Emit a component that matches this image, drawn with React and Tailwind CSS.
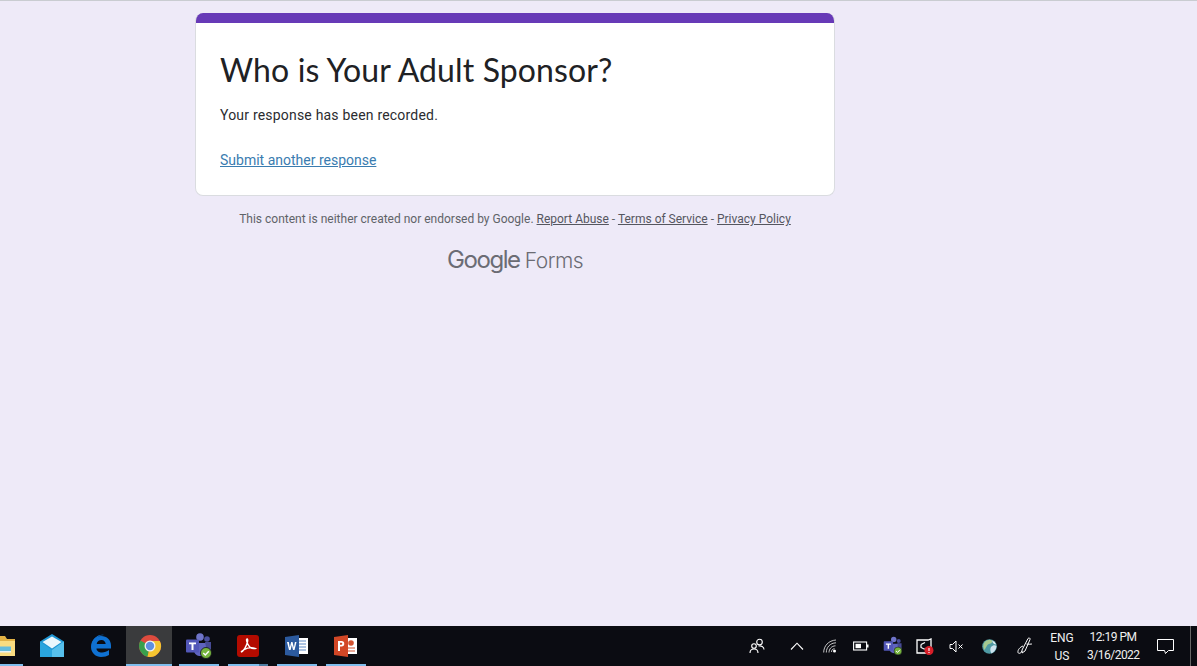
const Slot = ({ active, under, split, children }) => (
  <div className="relative h-full w-[49px] flex items-center justify-center shrink-0">
    {active && <div className="absolute inset-y-0 left-[1px] right-[2px] bg-[#3a3b3d]" />}
    <div className="relative flex">{children}</div>
    {under && <div className={`absolute bottom-0 h-[2px] bg-[#7fbdec] ${active ? "left-[1px] right-[2px]" : "left-[5px] right-[4px]"}`} />}
    {split && <div className="absolute bottom-0 right-[4px] w-[9px] h-[2px] bg-[#4f7ea3]" />}
  </div>
);

const Folder = () => (
  <svg width="24" height="24" viewBox="0 0 24 24">
    <path d="M0 2h14l2 3h8v17H0z" fill="#e3b245" />
    <path d="M0 7h24v15H0z" fill="#f9dc80" />
    <path d="M5 12.500h15V17H5z" fill="#65bcdc" />
    <path d="M5 17h15v1.500H5z" fill="#e6f3f6" />
  </svg>
);
const Mail = () => (
  <svg width="26" height="24" viewBox="0 0 26 24">
    <path d="M1 7.500 13 0l12 7.500V23H1z" fill="#1f96d3" />
    <path d="M3.500 8 13 2.500 22.500 8 13 14.500z" fill="#e9f7fd" />
    <path d="M1 7.500l12 8.500 12-8.500V23H1z" fill="#2aa5de" />
    <path d="M13 16 25 7.500V23H13z" fill="#57c0ec" />
  </svg>
);
const Edge = () => (
  <svg width="22" height="24" viewBox="0 0 22 24">
    <path d="M11 2C5 2 1 7 1 13c0 6 5 10 10 10 3.500 0 6-1 8-2v-5c-2 1.500-4.500 2.500-7 2.500-3 0-5.500-1.500-5.500-4H21v-3C21 6 17 2 11 2zM6.700 10c.3-2.500 2.300-4 4.800-4s4 1.700 4.200 4z" fill="#0f71d2" />
    <path d="M2 9C4 3 9 0 14 1c-5 0-8 3-9.500 6z" fill="#0f71d2" />
  </svg>
);
const Chrome = () => (
  <svg width="24" height="24" viewBox="0 0 24 24">
    <circle cx="12" cy="12" r="11" fill="#dd4b3e" />
    <path d="M12 12 2.500 6.500A11 11 0 0 0 9.500 22.700z" fill="#38a04d" />
    <path d="M12 12l-2.500 10.700A11 11 0 0 0 21.800 7H12z" fill="#f4c430" />
    <circle cx="12" cy="12" r="5.500" fill="#f1f1f1" />
    <circle cx="12" cy="12" r="4.200" fill="#5f8fe0" />
  </svg>
);
const Teams = ({ s = 28 }) => (
  <svg width={s} height={s} viewBox="0 0 28 28">
    <circle cx="15" cy="5" r="3.800" fill="#6f74c9" />
    <circle cx="22" cy="7" r="2.800" fill="#4a4f9e" />
    <path d="M9 11h13v7c0 4-3 6-6.500 6S9 22 9 18z" fill="#5f64bf" />
    <path d="M20 10h6v7c0 2-2 3-4 3z" fill="#474b96" />
    <rect x="1" y="7.500" width="13" height="13" rx="1" fill="#5257b8" />
    <path d="M4 10.500h7v1.800H8.500V18h-2v-5.700H4z" fill="#fff" />
    <circle cx="21" cy="21" r="5.500" fill="#76b43e" stroke="#101218" strokeWidth="0.800" />
    <path d="M18.300 21l2 2 3.500-3.800" fill="none" stroke="#fff" strokeWidth="1.400" />
  </svg>
);
const Acrobat = () => (
  <svg width="22" height="22" viewBox="0 0 22 22">
    <rect width="22" height="22" rx="3" fill="#b30b00" />
    <path d="M4 17c3-1 5-5 6.500-10 .4-2 .2-3-.4-3-.8 0-.8 2 .4 4.500C12 12 15 14 18 13.500c-3-1.500-8-.5-11.500 1.500C5 16 4 17 4 17z" fill="none" stroke="#fff" strokeWidth="1.400" />
  </svg>
);
const Word = () => (
  <svg width="24" height="22" viewBox="0 0 24 22">
    <rect x="11" y="3" width="12" height="16" fill="#fff" />
    <path d="M13 6h8M13 9h8M13 12h8M13 15h8" stroke="#5d8ac5" strokeWidth="1.200" />
    <path d="M0 2 14 0v22L0 20z" fill="#2c5a9e" />
    <path d="M2 7h1.800l1 5.500L6.200 7h1.300l1.400 5.500L9.900 7h1.600l-2 8H8L6.800 10 5.600 15H4z" fill="#fff" />
  </svg>
);
const Ppt = () => (
  <svg width="24" height="22" viewBox="0 0 24 22">
    <rect x="11" y="3" width="12" height="16" fill="#fff" />
    <circle cx="17" cy="8" r="2.800" fill="#d35230" />
    <path d="M13 13h8M13 16h8" stroke="#d35230" strokeWidth="1.200" />
    <path d="M0 2 14 0v22L0 20z" fill="#d24726" />
    <path d="M4 6h3.500a2.700 2.700 0 0 1 0 5.500H6V16H4zM6 7.800v2h1.300a1 1 0 0 0 0-2z" fill="#fff" fillRule="evenodd" />
  </svg>
);
const People = () => (
  <svg width="16" height="16" viewBox="0 0 16 16" fill="none" stroke="#fff" strokeWidth="1.100">
    <circle cx="5" cy="8" r="2.300" /><path d="M1 15c0-3 2-4 4-4s4 1 4 4" />
    <circle cx="10.500" cy="4" r="2.800" /><path d="M9.500 8c2.500-.5 5.500.5 5.500 3.500" />
  </svg>
);
const Chevron = () => (
  <svg width="14" height="8" viewBox="0 0 14 8" fill="none" stroke="#fff" strokeWidth="1.100"><path d="M1 7.500 7 1.200l6 6.300" /></svg>
);
const Wifi = () => (
  <svg width="14" height="14" viewBox="0 0 14 14" fill="none" stroke="#d8d8d8" strokeWidth="0.900">
    <path d="M.7 13.500C.7 7 5.500 1.500 13 1" /><path d="M3.300 13.500C3.300 8.500 7 4 13 3.800" /><path d="M6 13.500C6 10 8.500 7 12.500 6.800" /><path d="M8.500 13c0-2 1-3 3-3.400" />
    <circle cx="11.500" cy="12" r="1.500" fill="#fff" stroke="none" />
  </svg>
);
const Battery = () => (
  <svg width="16" height="10" viewBox="0 0 16 10">
    <rect x=".6" y="1" width="13" height="8" fill="none" stroke="#fff" strokeWidth="1.100" />
    <rect x="2.500" y="2.800" width="5.500" height="4.400" fill="#fff" />
    <rect x="14" y="3.500" width="1.500" height="3" fill="#fff" />
  </svg>
);
const Recorder = () => (
  <svg width="18" height="17" viewBox="0 0 18 17" fill="none">
    <path d="M1 5V15h9M1 5V2h11l3-1v8" stroke="#fff" strokeWidth="1.300" />
    <path d="M5 6.500 9 4.500M5 6.500v3l3 1.500h2" stroke="#fff" strokeWidth="1.200" />
    <circle cx="13" cy="12.500" r="4.500" fill="#d81e28" />
    <path d="M13 10v3M13 14v1" stroke="#fff" strokeWidth="1.100" />
  </svg>
);
const Mute = () => (
  <svg width="15" height="13" viewBox="0 0 15 13" fill="none" stroke="#fff" strokeWidth="1">
    <path d="M1 4.500h2.500L7 1v11L3.500 8.500H1z" /><path d="m9.500 4.500 4 4M13.500 4.500l-4 4" />
  </svg>
);
const Globe = () => (
  <svg width="15" height="15" viewBox="0 0 15 15">
    <circle cx="7.500" cy="7.500" r="7.300" fill="#4f9aa4" />
    <path d="M2 4c2-3 6-4 8-2.500 1 2-1 3-3 3.500S4 9 2.500 11C1 9 1 6 2 4z" fill="#a6c98f" />
    <path d="M9 8c2-2 4-2 5.500-1 0 3-2 6-5 7.500C8 12 8 10 9 8z" fill="#cde3ee" />
    <path d="M10 1.500c2 .7 3.500 2 4 4-1.500 0-3-1-4-4z" fill="#e8f1f5" />
  </svg>
);
const Pen = () => (
  <svg width="16" height="18" viewBox="0 0 16 18" fill="none" stroke="#fff" strokeWidth="1">
    <path d="M5 13 11 1.500c1-1 2.500-.5 2 1L8 14l-3 2z" />
    <path d="M6 9C3 10 .5 13 1 15.500c.5 1.500 3 1 4-1.500M9.500 7c2 .5 5 0 5.500 0" />
  </svg>
);

export default function App() {
  return (
    <div className="h-[666px] w-[1197px] overflow-hidden flex flex-col bg-[#eeeaf8] font-['Roboto',sans-serif]">
      <div className="h-px bg-[#c9ccd1] shrink-0" />
      <main className="flex-1 pt-[12px] pl-[195px]">
        <section className="w-[640px] h-[183px] bg-white rounded-[8px] border border-[#dadce0] border-t-0 overflow-hidden box-border">
          <div className="h-[10px] bg-[#673ab7] -mx-px" />
          <div className="pl-[24px] pt-[27px]">
            <h1 className="text-[32px] leading-[40px] tracking-[0.12px] text-[#202124] font-['Lato',sans-serif] whitespace-nowrap">Who is Your Adult Sponsor?</h1>
            <p className="mt-[15px] text-[14px] leading-[20px] tracking-[0.2px] text-[#2b2c2f]">Your response has been recorded.</p>
            <a className="block mt-[25px] text-[14px] leading-[20px] text-[#3a7cb0] underline">Submit another response</a>
          </div>
        </section>
        <div className="w-[640px] mt-[15px] text-center text-[12px] leading-[16px] text-[#5f6368]">
          This content is neither created nor endorsed by Google. <a className="underline text-[#55565f]">Report Abuse</a> - <a className="underline text-[#55565f]">Terms of Service</a> - <a className="underline text-[#55565f]">Privacy Policy</a>
        </div>
        <div className="w-[640px] mt-[18px] text-center leading-[30px] text-[#6b6c74] whitespace-nowrap">
          <span className="text-[24px] font-['Inter',sans-serif] font-normal tracking-[-1.4px]">Google</span>
          <span className="text-[21px] ml-[5px] font-['Inter',sans-serif] font-light tracking-[-0.5px]">Forms</span>
        </div>
      </main>
      <footer className="h-[40px] shrink-0 bg-[#0b0c12] flex items-center text-white">
        <div className="flex h-full -ml-[22px]">
          <Slot under><Folder /></Slot>
          <Slot><Mail /></Slot>
          <Slot><Edge /></Slot>
          <Slot active under><Chrome /></Slot>
          <Slot under><Teams /></Slot>
          <Slot under split><Acrobat /></Slot>
          <Slot under><Word /></Slot>
          <Slot under><Ppt /></Slot>
        </div>
        <div className="ml-auto flex items-center h-full">
          <div className="w-[36px] flex justify-center"><People /></div>
          <div className="w-[44px] flex justify-center"><Chevron /></div>
          <div className="w-[22px] flex justify-center"><Wifi /></div>
          <div className="w-[40px] flex justify-center"><Battery /></div>
          <div className="w-[24px] flex justify-center"><Teams s={20} /></div>
          <div className="w-[40px] flex justify-center"><Recorder /></div>
          <div className="w-[22px] flex justify-center"><Mute /></div>
          <div className="w-[44px] flex justify-center"><Globe /></div>
          <div className="w-[28px] flex justify-center"><Pen /></div>
          <div className="w-[46px] text-center text-[12px] leading-[18px] text-[#f0f0f0]"><div className="translate-y-[1px]">ENG</div><div className="translate-y-[1px]">US</div></div>
          <div className="w-[52px] ml-[2px] text-center text-[12px] leading-[18px] tracking-[-0.5px] text-[#f0f0f0] whitespace-nowrap"><div>12:19 PM</div><div>3/16/2022</div></div>
          <div className="w-[50px] ml-[1px] flex justify-center">
            <svg width="17" height="15" viewBox="0 0 17 15" fill="none" stroke="#fff" strokeWidth="1"><path d="M.5.500h16v11h-5l-3 3-1-3h-7z" /></svg>
          </div>
          <div className="w-[7px] h-full flex justify-start"><div className="w-px h-full bg-[#666]" /></div>
        </div>
      </footer>
    </div>
  );
}
